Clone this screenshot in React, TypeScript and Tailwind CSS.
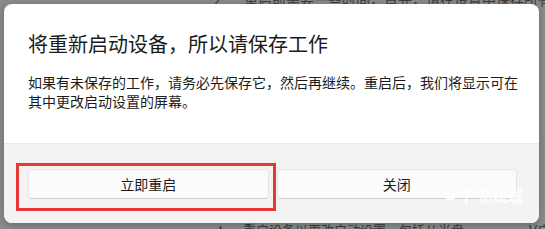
import React from "react";

const font = { fontFamily: '"Noto Sans CJK SC", "Noto Sans", sans-serif' };

export default function App() {
  return (
    <div className="relative w-[545px] h-[229px] overflow-hidden bg-[#8b8b8b]" style={font}>
      {/* dimmed page behind the dialog */}
      <div className="absolute inset-0 flex flex-col justify-between text-[14px] text-[#3c3c3c] whitespace-nowrap">
        <div className="mt-[-11px] pl-[212px] flex gap-[18px]">
          <span>↗</span>
          <span>重启前需要一些时间，首先，请在设置中保存所有更改</span>
        </div>
        <div className="mb-[-12px] pl-[214px] flex justify-between pr-[-10px]">
          <span className="text-[13px]">★ 　重启设备以更改启动设置，包括从光盘</span>
          <span className="mr-[-6px]">V启</span>
        </div>
      </div>

      {/* dialog */}
      <div className="absolute left-[4px] top-[4px] w-[535px] h-[219px] rounded-[8px] bg-white overflow-hidden flex flex-col shadow-[0_2px_8px_rgba(0,0,0,0.25)]">
        <div className="flex-1 pl-6 pr-3 pt-[26px]">
          <h1 className="text-[20px] leading-[28px] text-[#1b1b1b] font-normal">
            将重新启动设备，所以请保存工作
          </h1>
          <p className="mt-[15px] text-[14px] leading-[19px] text-[#1b1b1b]">
            如果有未保存的工作，请务必先保存它，然后再继续。重启后，我们将显示可在其中更改启动设置的屏幕。
          </p>
        </div>
        <div className="h-[80px] bg-[#f3f3f3] border-t border-[#ebebeb] pl-6 pt-[25px] pr-[22px]">
          <div className="flex gap-2">
            <div className="relative flex-1">
              <div className="absolute left-[-12px] right-[-7px] top-[-6px] bottom-[-12px] border-[3px] border-[#e53935]" />
              <button className="w-full h-[30px] rounded-[4px] bg-[#fbfbfb] border border-[#e5e5e5] border-b-[#d0d0d0] text-[14px] text-[#1b1b1b]">
                立即重启
              </button>
            </div>
            <div className="relative flex-1">
              <button className="w-full h-[30px] rounded-[4px] bg-[#fbfbfb] border border-[#e5e5e5] border-b-[#d0d0d0] text-[14px] text-[#1b1b1b]">
                关闭
              </button>
              {/* watermark */}
              <div className="absolute right-[-6px] top-[16px] flex items-center gap-1 text-white text-[15px] font-bold whitespace-nowrap blur-[0.5px] opacity-90">
                <span className="w-[10px] h-[10px] rounded-full border-[3px] border-white" />
                <span>千</span>
                <span>系统城</span>
              </div>
            </div>
          </div>
        </div>
      </div>
    </div>
  );
}
